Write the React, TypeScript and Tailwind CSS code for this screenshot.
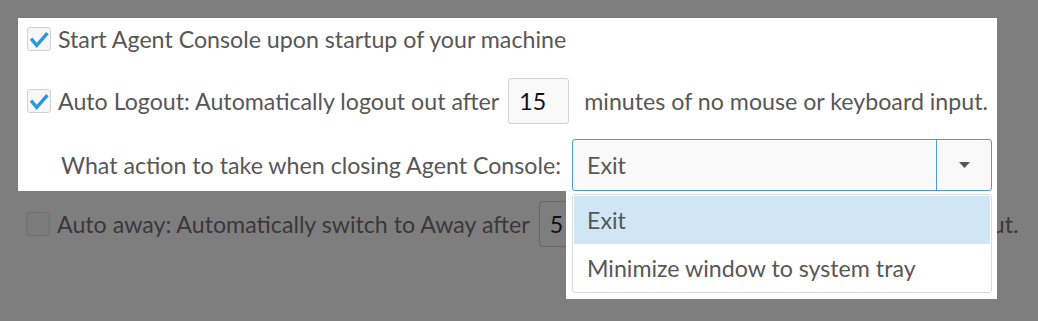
import React from 'react';

function Check({ checked, dim }: { checked?: boolean; dim?: boolean }) {
  return (
    <span
      className={
        dim
          ? 'flex h-[24px] w-[24px] shrink-0 items-center justify-center rounded-[3px] border border-dotted border-[#666566] bg-[#7c7b7c]'
          : 'flex h-[24px] w-[24px] shrink-0 items-center justify-center rounded-[3px] border border-[#d2d2d2] bg-[#f7f7f7]'
      }
    >
      {checked && (
        <svg width="22" height="22" viewBox="0 0 24 24" fill="none">
          <path d="M4.5 13 L9.5 19 L20 7" stroke="#2e96dc" strokeWidth="3.6" strokeLinecap="square" strokeLinejoin="miter" />
        </svg>
      )}
    </span>
  );
}

export default function App() {
  const font = { fontFamily: 'Lato, "Open Sans", sans-serif' };
  return (
    <div className="relative h-[321px] w-[1038px] overflow-hidden bg-[#7f7e7f] pt-[18px] whitespace-nowrap" style={font}>
      <div className="ml-[18px] h-[173px] w-[979px] bg-white pl-[9px] text-[23.2px] text-[#575757]">
        <div className="flex h-[42px] items-center gap-[7px]">
          <Check checked />
          <span>Start Agent Console upon startup of your machine</span>
        </div>

        <div className="mt-[18px] flex h-[46px] items-center">
          <Check checked />
          <span className="ml-[7px] shrink-0">Auto Logout: Automatically logout out after</span>
          <div className="ml-[9px] flex h-[46px] w-[61px] shrink-0 items-center rounded-[3px] border border-[#d4d4d4] bg-[#f9f9f9] pl-[10px] text-[#111]">
            15
          </div>
          <span className="ml-[15px] shrink-0">minutes of no mouse or keyboard input.</span>
        </div>

        <div className="mt-[15px] flex h-[52px] items-center pl-[34px]">
          <span className="shrink-0">What action to take when closing Agent Console:</span>
          <div className="ml-auto mr-[5px] flex h-[52px] w-[420px] shrink-0 items-stretch rounded-[3px] border border-[#4c9bd3] bg-[#f9f9f9]">
            <div className="flex flex-1 items-center pl-[14px]">Exit</div>
            <div className="flex w-[55px] items-center justify-center border-l border-[#4c9bd3]">
              <svg width="11" height="6" viewBox="0 0 11 6">
                <path d="M0 0 H11 L5.5 6 Z" fill="#555" />
              </svg>
            </div>
          </div>
        </div>
      </div>

      <div className="mt-[10px] flex h-[46px] items-center pl-[26px] text-[23.2px] text-[#393839]">
        <Check dim />
        <span className="ml-[7px] shrink-0">Auto away: Automatically switch to Away after</span>
        <div className="ml-[9px] flex h-[46px] w-[61px] shrink-0 items-center rounded-[3px] border border-[#686768] pl-[10px] text-[#111]">
          5
        </div>
        <span className="ml-[15px] shrink-0">minutes of no mouse or keyboard input.</span>
      </div>

      <div className="absolute left-[566px] top-[191px] h-[108px] w-[431px] bg-white pb-[6px] pl-[6px] pr-[5px] pt-[3px] text-[23.2px] text-[#575757]">
        <div className="h-full rounded-[3px] border border-[#dadada] p-px">
          <div className="flex h-[48px] items-center bg-[#d0e6f4] pl-[13px]">Exit</div>
          <div className="flex h-[48px] items-center pl-[13px]">Minimize window to system tray</div>
        </div>
      </div>
    </div>
  );
}
